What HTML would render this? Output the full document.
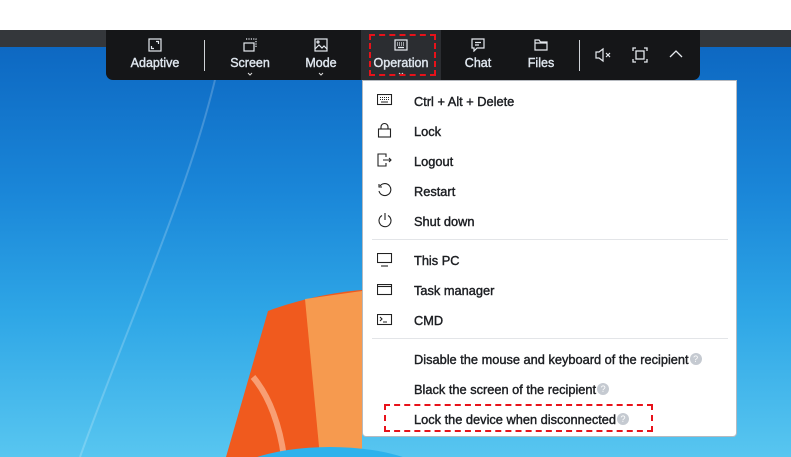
<!DOCTYPE html>
<html><head><style>
*{margin:0;padding:0;box-sizing:border-box}
html,body{width:791px;height:457px;overflow:hidden}
body{position:relative;background:#fff;font-family:"Liberation Sans",sans-serif}
.desk{position:absolute;left:0;top:47px;width:791px;height:410px;overflow:hidden;background:linear-gradient(180deg,#0d68c2 0%,#1a86d8 35%,#2ea6e6 65%,#58c6f0 100%)}
.strip{position:absolute;left:0;top:30px;width:791px;height:17px;background:#34373b}
.tb{position:absolute;left:106px;top:30px;width:594px;height:50px;background:#151618;border-radius:0 0 7px 7px}
.btn{position:absolute;top:0;height:50px;color:#dfe6ee;font-size:12.5px;-webkit-text-stroke:.4px #dfe6ee;text-align:center}
.btn svg.i{position:absolute;top:8px;left:50%;margin-left:-7px}
.btn span{position:absolute;top:26px;left:0;right:0}
.btn svg.car{position:absolute;top:41px;left:50%;margin-left:-3px}
.sep{position:absolute;top:10px;width:1px;height:31px;background:#cfd3d8}
.menu{position:absolute;left:362px;top:80px;width:375px;height:357px;background:#fff;border:1px solid #b6bac0;border-radius:0 0 4px 4px}
.it{position:absolute;left:51px;font-size:12.8px;-webkit-text-stroke:.4px #1c1e22;color:#1c1e22;white-space:nowrap;line-height:15px}
.ic{position:absolute;left:14px}
.hr{position:absolute;left:9px;width:356px;height:1px;background:#e3e5e8}
.q{display:inline-block;width:12px;height:12px;border-radius:6px;background:#c5cad1;color:#fff;-webkit-text-stroke:0;font-size:9px;text-align:center;line-height:12px;vertical-align:top;margin-top:1px;margin-left:1px}
.dash{position:absolute;border:2.5px dashed #e8121a}
</style></head><body>
<div class="strip"></div>
<div class="desk">
<svg width="791" height="410" style="position:absolute;left:0;top:0">
<path d="M222 0 C200 120 130 270 80 410" stroke="rgba(255,255,255,.2)" stroke-width="2" fill="none"/>
<path d="M268 264 C300 252 335 245 362 243 L362 410 L226 410 Z" fill="#f05a1e"/>
<path d="M305 252 L362 244 L362 410 L320 410 Z" fill="#f8b060" opacity=".75"/>
<path d="M253 330 C270 350 280 380 284 410" stroke="rgba(255,215,185,.55)" stroke-width="6" fill="none"/>
<ellipse cx="330" cy="440" rx="110" ry="40" fill="#2db2ec"/>
</svg>
</div>
<div class="tb">
<div class="btn" style="left:10px;width:78px"><svg class="i" width="14" height="14" viewBox="0 0 14 14" fill="none" stroke="#e6eaef" stroke-width="1.2"><rect x="1" y="1" width="12" height="12"/><path d="M3.5 8v2.5H6M10.5 6V3.5H8"/></svg><span>Adaptive</span></div>
<div class="sep" style="left:98px"></div>
<div class="btn" style="left:105px;width:78px"><svg class="i" width="14" height="14" viewBox="0 0 14 14" fill="none" stroke="#e6eaef" stroke-width="1.2"><rect x="1" y="5" width="10" height="8"/><path d="M3 1h10v9" stroke-dasharray="1.2 1.2"/></svg><span>Screen</span><svg class="car" width="6" height="6" viewBox="0 0 6 6"><path d="M1 2l2 2 2-2" stroke="#ddd" fill="none"/></svg></div>
<div class="btn" style="left:176px;width:78px"><svg class="i" width="14" height="14" viewBox="0 0 14 14" fill="none" stroke="#e6eaef" stroke-width="1.2"><rect x="1" y="1" width="12" height="12"/><path d="M1 11l4-4 3 3 2-2 3 3"/><circle cx="4" cy="4" r="1"/></svg><span>Mode</span><svg class="car" width="6" height="6" viewBox="0 0 6 6"><path d="M1 2l2 2 2-2" stroke="#ddd" fill="none"/></svg></div>
<div class="btn" style="left:255px;width:80px;background:#2b2d31"><svg class="i" width="14" height="14" viewBox="0 0 14 14" fill="none" stroke="#e6eaef" stroke-width="1.2"><rect x="1" y="2" width="12" height="10"/><path d="M3 5h1M5 5h1M7 5h1M9 5h1M3 7h1M5 7h1M7 7h1M9 7h1M4 9.5h6"/></svg><span>Operation</span><svg class="car" width="6" height="6" viewBox="0 0 6 6"><path d="M1 2l2 2 2-2" stroke="#ddd" fill="none"/></svg></div>
<div class="btn" style="left:335px;width:74px"><svg class="i" width="14" height="14" viewBox="0 0 14 14" fill="none" stroke="#e6eaef" stroke-width="1.2"><path d="M1 1h12v9H6l-3 3v-3H1z"/><path d="M4 4.5h6M4 7h4"/></svg><span>Chat</span></div>
<div class="btn" style="left:398px;width:74px"><svg class="i" width="14" height="14" viewBox="0 0 14 14" fill="none" stroke="#e6eaef" stroke-width="1.2"><path d="M1 2h4l1.5 2H13v8H1z M1 5h12"/></svg><span>Files</span></div>
<div class="sep" style="left:473px"></div>
<svg style="position:absolute;left:489px;top:17px" width="18" height="16" viewBox="0 0 18 16" fill="none" stroke="#e6eaef" stroke-width="1.2"><path d="M1 5h3l4-3v12l-4-3H1z"/><path d="M11 6l4 4M15 6l-4 4"/></svg>
<svg style="position:absolute;left:526px;top:17px" width="16" height="16" viewBox="0 0 16 16" fill="none" stroke="#e6eaef" stroke-width="1.3"><path d="M1 4V1h3M12 1h3v3M15 12v3h-3M4 15H1v-3"/><rect x="4" y="4" width="8" height="8"/></svg>
<svg style="position:absolute;left:562px;top:19px" width="16" height="10" viewBox="0 0 16 10" fill="none" stroke="#e6eaef" stroke-width="1.3"><path d="M2 8l6-6 6 6"/></svg>
</div>
<div class="dash" style="left:369px;top:34px;width:67px;height:42px"></div>
<div class="menu">
<svg class="ic" style="top:13px" width="16" height="12" viewBox="0 0 16 12" fill="none" stroke="#222" stroke-width="1.1"><rect x=".5" y=".5" width="14" height="10"/><path d="M3 3.5h1M5 3.5h1M7 3.5h1M9 3.5h1M11 3.5h1M3 5.5h1M5 5.5h1M7 5.5h1M9 5.5h1M11 5.5h1M4 8h7"/></svg>
<div class="it" style="top:13px">Ctrl + Alt + Delete</div>
<svg class="ic" style="top:41px" width="16" height="16" viewBox="0 0 16 16" fill="none" stroke="#222" stroke-width="1.1"><rect x="1.5" y="7" width="12" height="8"/><path d="M4 7V5a3.5 3.5 0 017 0v2"/></svg>
<div class="it" style="top:43px">Lock</div>
<svg class="ic" style="top:72px" width="16" height="14" viewBox="0 0 16 14" fill="none" stroke="#222" stroke-width="1.1"><path d="M9 4V1H1v12h8v-3M6 7h8M12 5l2 2-2 2"/></svg>
<div class="it" style="top:73px">Logout</div>
<svg class="ic" style="top:102px" width="16" height="16" viewBox="0 0 16 16" fill="none" stroke="#222" stroke-width="1.1"><path d="M3 3a6 6 0 11-1 5M2 1v3h3"/></svg>
<div class="it" style="top:103px">Restart</div>
<svg class="ic" style="top:131px" width="16" height="16" viewBox="0 0 16 16" fill="none" stroke="#222" stroke-width="1.1"><path d="M5 3.5a6 6 0 106 0M8 1v7"/></svg>
<div class="it" style="top:133px">Shut down</div>
<div class="hr" style="top:158px"></div>
<svg class="ic" style="top:172px" width="16" height="14" viewBox="0 0 16 14" fill="none" stroke="#222" stroke-width="1.1"><rect x=".5" y=".5" width="14" height="9"/><path d="M4 13h7"/></svg>
<div class="it" style="top:172px">This PC</div>
<svg class="ic" style="top:203px" width="16" height="12" viewBox="0 0 16 12" fill="none" stroke="#222" stroke-width="1.1"><rect x=".5" y=".5" width="14" height="10"/><path d="M.5 2.5h14"/></svg>
<div class="it" style="top:202px">Task manager</div>
<svg class="ic" style="top:233px" width="16" height="12" viewBox="0 0 16 12" fill="none" stroke="#222" stroke-width="1.1"><rect x=".5" y=".5" width="14" height="10"/><path d="M3 3l2 2-2 2M6 8h4"/></svg>
<div class="it" style="top:232px">CMD</div>
<div class="hr" style="top:257px"></div>
<div class="it" style="top:271px">Disable the mouse and keyboard of the recipient<span class="q">?</span></div>
<div class="it" style="top:301px">Black the screen of the recipient<span class="q">?</span></div>
<div class="it" style="top:331px">Lock the device when disconnected<span class="q">?</span></div>
</div>
<div class="dash" style="left:384px;top:404px;width:269px;height:28px"></div>
</body></html>
